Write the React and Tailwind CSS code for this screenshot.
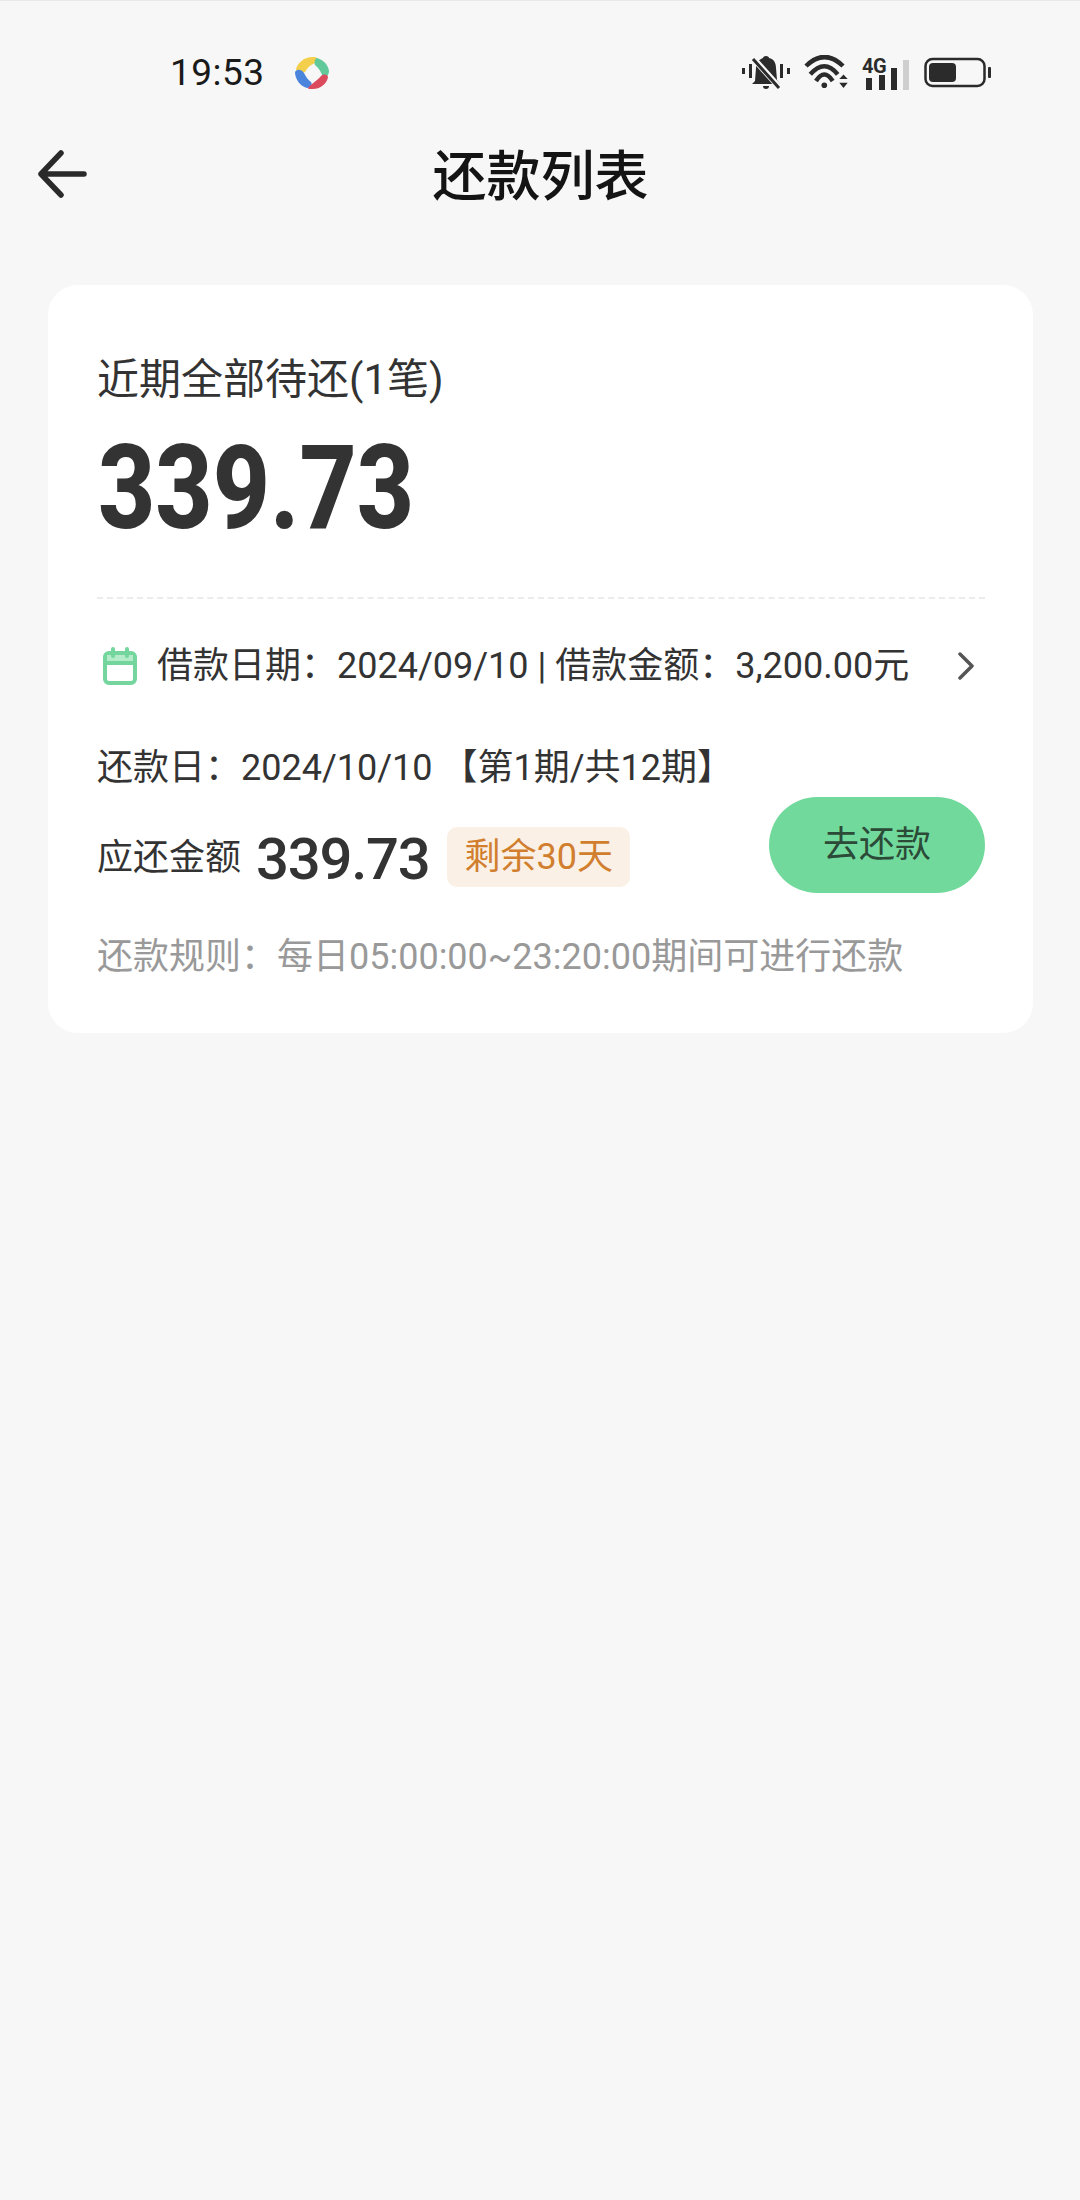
const font = { fontFamily: 'Roboto, "Noto Sans CJK SC", sans-serif' };

function AppLogo() {
  return (
    <svg width="34" height="36" viewBox="0 0 34 36" className="ml-[30px]">
      <path d="M1 14C3 7 10 1 20 2c4 1 3 5 0 6-5 2-8 5-10 9-4 2-8 1-9-3z" fill="#f4cf4b" />
      <path d="M22 3c7 2 11 7 12 13 0 4-3 7-6 6-2-5-4-9-8-12-1-3 0-7 2-7z" fill="#62c99a" />
      <path d="M0 17c2-3 6-3 9 1 2 4 4 7 7 9 2 3-1 6-4 6C5 31 0 24 0 17z" fill="#4a84dc" />
      <path d="M13 33c3-4 10-8 13-12 3-2 6-2 7 1-1 7-9 13-17 12-2 0-3 0-3-1z" fill="#dc4a5e" />
    </svg>
  );
}

function BellOff() {
  return (
    <svg width="48" height="36" viewBox="0 0 48 36" fill="#2b2b2b">
      <rect x="0" y="13" width="3" height="6" />
      <rect x="7" y="9" width="3" height="14" />
      <rect x="38" y="9" width="3" height="14" />
      <rect x="45" y="13" width="3" height="6" />
      <path d="M24 1c2 0 3 1 3 2 5 1 7 5 7 10l1 12 3 4H10l3-3 1-13c0-6 4-9 7-10 0-1 1-2 3-2z" />
      <path d="M21 31h6c0 2-1 3-3 3s-3-1-3-3z" />
      <path d="M11 3 38 33" stroke="#f7f7f7" strokeWidth="6" />
      <path d="M11 4 37 33" stroke="#2b2b2b" strokeWidth="3" />
    </svg>
  );
}

function Wifi() {
  return (
    <svg width="44" height="36" viewBox="0 0 44 36" fill="none" stroke="#2b2b2b" strokeWidth="4.5">
      <path d="M2 11Q20.5-7 39 11" />
      <path d="M6.3 19.3Q20.5 3 33.7 19.3" />
      <path d="M12 26Q20.3 13 28.7 26" />
      <circle cx="20.3" cy="30.3" r="2.8" fill="#2b2b2b" stroke="none" />
      <path d="M35.3 24h8.4l-4.2-4.5zM35.3 27.7h8.4L39.5 33z" fill="#2b2b2b" stroke="none" />
    </svg>
  );
}

function Signal() {
  return (
    <svg width="48" height="38" viewBox="0 0 48 38">
      <text x="0" y="19" fontSize="20" fontWeight="700" fill="#2b2b2b" fontFamily="Roboto, sans-serif" letterSpacing="-0.5">4G</text>
      <rect x="4" y="24" width="6" height="12" fill="#2b2b2b" />
      <rect x="17" y="21" width="6" height="15" fill="#2b2b2b" />
      <rect x="29" y="14" width="6" height="22" fill="#2b2b2b" />
      <rect x="41" y="6" width="6" height="30" fill="#cfcfcf" />
    </svg>
  );
}

function Battery() {
  return (
    <svg width="68" height="32" viewBox="0 0 68 32" fill="none">
      <rect x="1.5" y="2" width="59" height="27" rx="7" stroke="#2b2b2b" strokeWidth="2.5" />
      <rect x="5" y="6" width="27" height="19" rx="4" fill="#2b2b2b" />
      <rect x="64" y="10" width="3" height="11" rx="1" fill="#2b2b2b" />
    </svg>
  );
}

function CalendarIcon() {
  return (
    <svg width="34" height="38" viewBox="0 0 34 38" fill="none" stroke="#74d69d" strokeWidth="4">
      <rect x="2" y="6" width="30" height="30" rx="4" />
      <path d="M4 8h26v8H4z" fill="#b4ebc8" stroke="none" />
      <path d="M2 16h30" />
      <path d="M10 2v7M24 2v7" strokeLinecap="round" />
    </svg>
  );
}

export default function App() {
  return (
    <div className="min-h-[2200px] bg-[#f7f7f7] text-[#333333]" style={font}>
      {/* status bar */}
      <div className="h-[144px] border-t border-[#e8e8e8] flex items-center justify-between pl-[170px] pr-[88px]">
        <div className="flex items-center">
          <span className="text-[37px] text-[#1a1a1a] tracking-[0.5px]">19:53</span>
          <AppLogo />
        </div>
        <div className="flex items-center gap-[14px]">
          <BellOff />
          <Wifi />
          <Signal />
          <Battery />
        </div>
      </div>

      {/* header */}
      <div className="h-[62px] grid grid-cols-[1fr_auto_1fr] items-center px-[38px]">
        <svg width="50" height="50" viewBox="0 0 50 50" fill="none" stroke="#2a2a2a" strokeWidth="5.5" strokeLinecap="round" strokeLinejoin="round" className="mb-[6px]">
          <path d="M46 25H3M23 4 3 25l20 21" />
        </svg>
        <div className="text-[54px] leading-[62px] pt-[3px] pl-[1px] font-medium text-[#141414]">还款列表</div>
        <div />
      </div>

      <div className="pl-[48px] pr-[47px] mt-[79px]">
        <div className="bg-white rounded-[30px] pt-[73px] pb-[51px] pl-[49px] pr-[48px]">
          <div className="text-[42px] leading-[44px] text-[#333333]">近期全部待还(1笔)</div>
          <div className="mt-[36px] ml-[1px] h-[100px] text-[117px] leading-[100px] font-extrabold text-[#333333] scale-x-[0.85] origin-left">339.73</div>

          <div className="mt-[59px] border-t-2 border-dashed border-[#ececec]" />

          <div className="mt-[42px] h-[50px] flex items-center justify-between">
            <div className="flex items-center pl-[6px]">
              <CalendarIcon />
              <span className="ml-[20px] text-[36px] leading-[50px] text-[#333333]">借款日期：2024/09/10 | 借款金额：3,200.00元</span>
            </div>
            <svg width="18" height="28" viewBox="0 0 18 28" fill="none" stroke="#555555" strokeWidth="3.5" strokeLinecap="round" strokeLinejoin="round" className="mr-[10px]">
              <path d="M3 2l12 12L3 26" />
            </svg>
          </div>

          <div className="mt-[52px] flex items-end justify-between">
            <div>
              <div className="h-[50px] text-[36px] leading-[50px] text-[#333333]">还款日：2024/10/10 【第1期/共12期】</div>
              <div className="mt-[30px] h-[70px] flex items-center">
                <span className="text-[36px] text-[#333333]">应还金额</span>
                <span className="ml-[15px] pt-[2px] text-[58px] leading-[70px] font-medium text-[#333333] tracking-[-1.25px]">339.73</span>
                <span className="ml-[18px] mb-[2px] h-[60px] px-[17px] flex items-center rounded-[10px] bg-[#fbf0e6] text-[36px] text-[#d17f2e]">剩余30天</span>
              </div>
            </div>
            <div className="w-[216px] h-[96px] rounded-full bg-[#72d99c] flex items-center justify-center text-[36px] text-[#2c4a38]">去还款</div>
          </div>

          <div className="mt-[39px] h-[50px] text-[36px] leading-[50px] text-[#999999]">还款规则：每日05:00:00~23:20:00期间可进行还款</div>
        </div>
      </div>
    </div>
  );
}
